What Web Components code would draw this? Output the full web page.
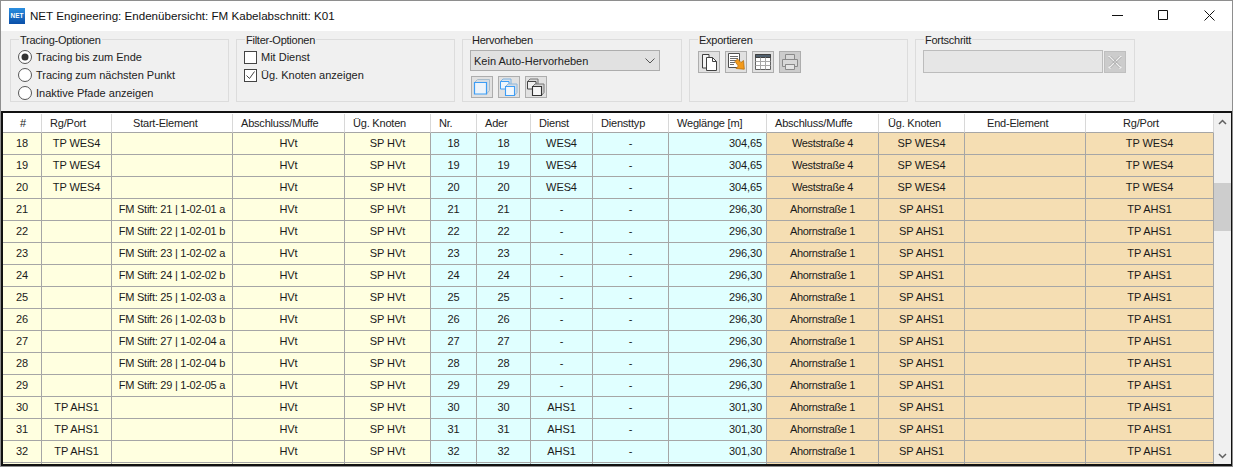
<!DOCTYPE html>
<html><head><meta charset="utf-8"><style>
html,body{margin:0;padding:0;background:#fff;overflow:hidden}
body{width:1233px;height:467px;font:11px "Liberation Sans",Arial,sans-serif;color:#000}
</style></head><body>
<app-window>
<title-bar></title-bar>
<tool-strip>
<group-box label="Tracing-Optionen" w="219">
<radio-opt checked>Tracing bis zum Ende</radio-opt>
<radio-opt>Tracing zum nächsten Punkt</radio-opt>
<radio-opt>Inaktive Pfade anzeigen</radio-opt>
</group-box>
<group-box label="Filter-Optionen" w="219">
<check-opt>Mit Dienst</check-opt>
<check-opt checked>Üg. Knoten anzeigen</check-opt>
</group-box>
<group-box label="Hervorheben" w="220" pt="2">
<combo-box>Kein Auto-Hervorheben</combo-box>
<btn-row>
<icon-btn><svg viewBox="0 0 20 20" width="20" height="20"><path d="M2.500 5.500l3-3h12v11l-3 3.500z" fill="#d6dde4" stroke="#a9bccb"/><path d="M2.500 5.500h12v11.500h-12z" fill="#edf4fb" stroke="#3d9df5" stroke-width="1.200"/></svg></icon-btn>
<icon-btn><svg viewBox="0 0 20 20" width="20" height="20"><path d="M1.500 4.500l2.500-2.500h8v7l-2 2z" fill="#dbe3ea" stroke="#7fb2e0"/><path d="M1.500 4.500h8.500v7.500h-8.500z" fill="#eef5fb" stroke="#3d9df5"/><path d="M6.500 9.500l2.500-2.500h9v8.500l-2.500 3z" fill="#d6dde4" stroke="#8fb7da"/><path d="M6.500 9.500h9v9h-9z" fill="#f2f7fc" stroke="#3d9df5" stroke-width="1.100"/></svg></icon-btn>
<icon-btn><svg viewBox="0 0 20 20" width="20" height="20"><path d="M1.500 4.500l2.500-2.500h8v7l-2 2z" fill="#d8d8d8" stroke="#777"/><path d="M1.500 4.500h8.500v7.500h-8.500z" fill="#efefef" stroke="#444"/><path d="M6.500 9.500l2.500-2.500h9v8.500l-2.500 3z" fill="#d4d4d4" stroke="#777"/><path d="M6.500 9.500h9v9h-9z" fill="#f6f6f6" stroke="#333" stroke-width="1.100"/></svg></icon-btn>
</btn-row>
</group-box>
<group-box label="Exportieren" w="219" pt="3">
<btn-row>
<icon-btn><svg viewBox="0 0 20 20" width="20" height="20" fill="#f4f4f4" stroke="#404040"><path d="M3.500 2.500h6.500v13.500h-6.500z"/><path d="M7.500 5.500h6l4 4v9h-10z" fill="#fff"/><path d="M13.500 5.500v4h4" fill="none"/></svg></icon-btn>
<icon-btn><svg viewBox="0 0 20 20" width="20" height="20" fill="#fff" stroke="#505050"><path d="M2.500 1.500h11v14h-11z"/><path d="M4 4.500h8M4 6.500h8M4 8.500h8M4 10.500h5M4 12.500h4" stroke="#6b6b6b"/><path d="M9 9.500l2.500-2.500 3.500 3.500 2.500-2 .8 8.700-8.300-.7 2.300-2.500z" fill="#f39a1a" stroke="#b8700f" stroke-width=".8"/></svg></icon-btn>
<icon-btn><svg viewBox="0 0 20 20" width="20" height="20" fill="#fff" stroke="#606060"><path d="M2.500 2.500h15v15h-15z"/><path d="M2.500 2.500h15v3h-15z" fill="#50606e" stroke="#404040"/><path d="M2.500 9.500h15M2.500 13.500h15M7.500 5.500v12M12.500 5.500v12" stroke="#a8a8a8"/></svg></icon-btn>
<icon-btn disabled><svg viewBox="0 0 20 20" width="20" height="20" fill="#d8d8d8" stroke="#8a8a8a"><path d="M5.500 2.500h9v5h-9z"/><path d="M2.500 7.500h15v7h-3v-2h-9v2h-3z"/><path d="M5.500 12.500h9v5h-9z" fill="#e4e4e4"/></svg></icon-btn>
</btn-row>
</group-box>
<group-box label="Fortschritt" w="220" pt="2">
<progress-row></progress-row>
</group-box>
</tool-strip>
<end-grid></end-grid>
</app-window>
<script>
const def=(n,html,init)=>customElements.define(n,class extends HTMLElement{
  connectedCallback(){ if(this.shadowRoot)return; this.attachShadow({mode:'open'}).innerHTML=typeof html==='function'?html(this):html; init&&init(this);}
});
def('app-window',`<style>:host{display:flex;flex-direction:column;width:1233px;height:467px;box-sizing:border-box;border:1px solid #8e8e8e;background:#f0f0f0}</style><slot></slot>`);
def('title-bar',`<style>:host{display:flex;align-items:center;height:30px;background:#fff;flex:none;padding:0 0 1px 8px;box-sizing:border-box;font-size:11.6px;color:#111}
.logo{width:16px;height:16px;margin-right:5px;background:linear-gradient(#2b8fe0,#0a4fa8);color:#fff;font:bold 6.5px "Liberation Sans";display:flex;align-items:center;justify-content:center}
.t{flex:1;white-space:nowrap}.c{width:46px;height:29px;display:flex;align-items:center;justify-content:center}</style>
<span class="logo">NET</span><span class="t">NET Engineering: Endenübersicht: FM Kabelabschnitt: K01</span>
<span class="c"><svg width="11" height="11"><path d="M0 5.500h11" stroke="#111"/></svg></span>
<span class="c"><svg width="11" height="11"><path d="M.5.500h9v9h-9z" fill="none" stroke="#111"/></svg></span>
<span class="c"><svg width="11" height="11"><path d="M.5.500l10 10M10.500.500l-10 10" stroke="#111"/></svg></span>`);
def('tool-strip',`<style>:host{display:flex;flex:none;height:80px;gap:7px;padding:8px 0 0 9px;box-sizing:border-box;background:#f0f0f0}</style><slot></slot>`);
def('group-box',h=>`<style>:host{display:block;position:relative;box-sizing:border-box;height:63px;width:${h.getAttribute('w')}px;border:1px solid #dcdcdc}
.l{position:absolute;left:8px;top:-6px;background:#f0f0f0;padding:0 1px;line-height:13px;color:#222;white-space:nowrap;letter-spacing:-.25px}
.b{padding:${8+(+h.getAttribute('pt')||0)}px 0 0 7px}</style><span class="l">${h.getAttribute('label')}</span><div class="b"><slot></slot></div>`);
const opt=(kind)=>h=>`<style>:host{display:flex;align-items:center;height:18px;gap:4px;white-space:nowrap;color:#222}
svg{flex:none}</style>${kind==='r'?
`<svg width="14" height="14"><circle cx="7" cy="7" r="6.500" fill="#fff" stroke="#555"/>${h.hasAttribute('checked')?'<circle cx="7" cy="7" r="3.500" fill="#333"/>':''}</svg>`:
`<svg width="13" height="13"><rect x=".5" y=".5" width="12" height="12" fill="#fff" stroke="#444"/>${h.hasAttribute('checked')?'<path d="M2.500 6.500l3 3 5-7" fill="none" stroke="#444"/>':''}</svg>`}<slot></slot>`;
def('radio-opt',opt('r'));def('check-opt',opt('c'));
def('combo-box',`<style>:host{display:flex;align-items:center;justify-content:space-between;box-sizing:border-box;width:190px;height:21px;background:#e1e1e1;border:1px solid #adadad;padding:0 4px 0 3px;margin-bottom:5px;color:#222}</style><slot></slot><svg width="10" height="6"><path d="M.5.500l4.500 4.500 4.500-4.500" fill="none" stroke="#555"/></svg>`);
def('btn-row',`<style>:host{display:flex;gap:5px;margin-left:1px}</style><slot></slot>`);
def('icon-btn',h=>`<style>:host{display:flex;align-items:center;justify-content:center;box-sizing:border-box;width:22px;height:22px;background:${h.hasAttribute('disabled')?'#cccccc':'#e1e1e1'};border:1px solid #adadad}svg{display:block}</style><slot></slot>`);
def('progress-row',`<style>:host{display:flex;gap:1px}.p{width:180px;height:23px;box-sizing:border-box;background:#e6e6e6;border:1px solid #bcbcbc}.x{width:22px;height:22px;margin-top:1px;background:#cccccc;border:1px solid #bfbfbf;box-sizing:border-box;display:flex;align-items:center;justify-content:center}</style><div class="p"></div><div class="x"><svg width="16" height="16"><path d="M2 2l12 12M14 2l-12 12" stroke="#f0f0f0" stroke-width="3"/><path d="M1.500 3l11 11M3 1.500l11 11M14.500 3l-11 11M13 1.500l-11 11" stroke="#a0a0a0"/></svg></div>`);
const cols=[39,70,121,112,86,46,54,62,76,98,112,86,121,128];
const heads=['#','Rg/Port','Start-Element','Abschluss/Muffe','Üg. Knoten','Nr.','Ader','Dienst','Diensttyp','Weglänge [m]','Abschluss/Muffe','Üg. Knoten','End-Element','Rg/Port'];
const hp=[17,8,21,8,8,8,8,8,8,8,8,9,22,37];
const rows=[];
for(let n=18;n<=33;n++){
  let g;
  if(n<=20){g={rg:'TP WES4',d:'WES4',w:'304,65',a:'Weststraße 4',u:'SP WES4',r:'TP WES4',st:''}}
  else if(n<=29){const i=n-21,pos=Math.floor(i/2)+1;g={rg:'',d:'-',w:'296,30',a:'Ahornstraße 1',u:'SP AHS1',r:'TP AHS1',st:`FM Stift: ${n} | 1-02-0${pos} ${i%2?'b':'a'}`}}
  else g={rg:'TP AHS1',d:'AHS1',w:'301,30',a:'Ahornstraße 1',u:'SP AHS1',r:'TP AHS1',st:''};
  if(n===33) g={rg:'',d:'',w:'',a:'',u:'',r:'',st:''};
  rows.push(g);
}
const tc=['y','y','y','y','y','c','c','c','c','c','o','o','o','o'];
let cells=heads.map((h,i)=>`<div class="h" style="padding-left:${hp[i]}px">${h}</div>`).join('');
rows.forEach((g,k)=>{const n=18+k,last=n===33;
 const v=[last?'':n,g.rg,g.st,last?'':'HVt',last?'':'SP HVt',last?'':n,last?'':n,g.d,last?'':'-',g.w,g.a,g.u,'',g.r];
 v.forEach((t,i)=>{cells+=`<div class="${tc[i]}${i==9?' rt':''}${i==2?' st':''}${i==10?' ab':''}">${t}</div>`});
});
def('end-grid',`<style>:host{display:flex;flex:1;min-height:0;background:#fff;border:solid #111;border-width:2px 1px 2px 2px;overflow:hidden;box-sizing:border-box}
.g{display:grid;grid-template-columns:${cols.join('px ')}px;grid-template-rows:19px;grid-auto-rows:22px;width:1211px;flex:none;align-content:start;padding-top:1px;height:100%;overflow:hidden;box-sizing:border-box}
.g>div{box-sizing:border-box;border-right:1px solid #a6a6a6;border-bottom:1px solid #a6a6a6;text-align:center;line-height:21px;white-space:nowrap;overflow:hidden;color:#1a1a1a;letter-spacing:-.1px}
.g>.h{background:#fff;border-right-color:#d8d8d8;line-height:18px;color:#222;text-align:left;letter-spacing:-.2px}
.y{background:#ffffe0}.c{background:#e0ffff}.o{background:#f5deb3}.g>.rt{text-align:right;padding-right:4px}
.g>.st{letter-spacing:-.25px}.g>.ab{letter-spacing:-.35px}
.sb{width:17px;background:#f0f0f0;flex:none;display:flex;flex-direction:column;position:relative;height:100%}
.thumb{position:absolute;left:0;right:0;top:70px;height:48px;background:#cdcdcd}
.a{height:17px;display:flex;align-items:center;justify-content:center}.sp{flex:1}
</style><div class="g">${cells}</div><div class="sb"><div class="a"><svg width="9" height="6"><path d="M1 5l3.500-3.500 3.500 3.500" fill="none" stroke="#606060" stroke-width="1.500"/></svg></div><div class="sp"></div><div class="thumb"></div><div class="a"><svg width="9" height="6"><path d="M1 1l3.500 3.500 3.500-3.500" fill="none" stroke="#606060" stroke-width="1.500"/></svg></div></div>`);
</script>
</body></html>
